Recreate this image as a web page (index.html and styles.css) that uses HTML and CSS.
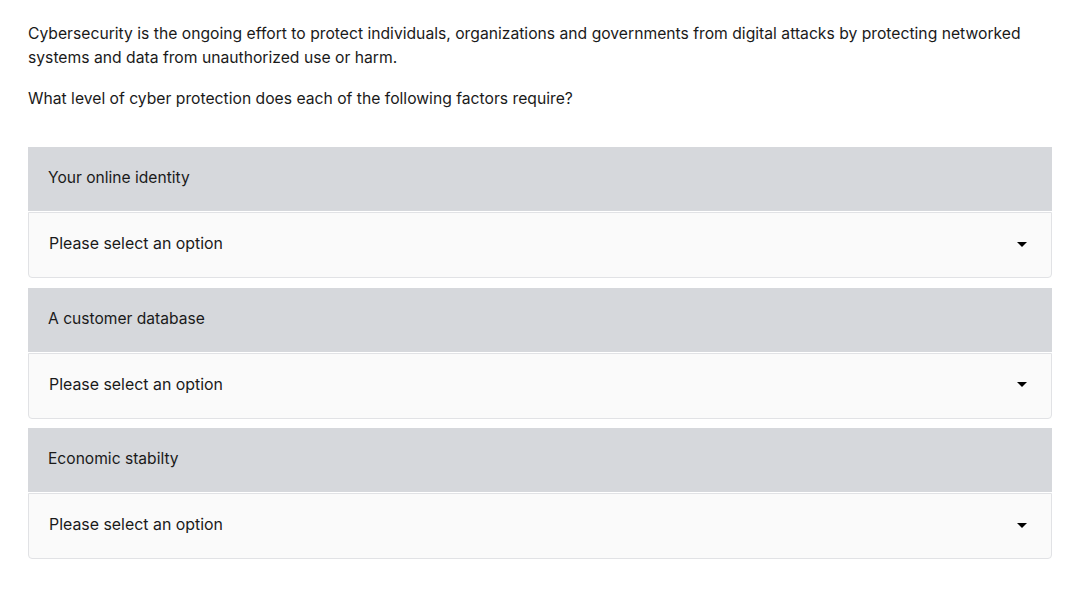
FILE: index.html
```html
<!DOCTYPE html>
<html lang="en">
<head>
<meta charset="utf-8">
<title>Cyber protection</title>
<link rel="stylesheet" href="styles.css">
</head>
<body>
<main class="page">
  <p class="intro">Cybersecurity is the ongoing effort to protect individuals, organizations and governments from digital attacks by protecting networked systems and data from unauthorized use or harm.</p>
  <p class="intro">What level of cyber protection does each of the following factors require?</p>
  <div class="questions">
    <div class="item">
      <div class="item-title">Your online identity</div>
      <div class="select">
        <span class="select-text">Please select an option</span>
        <span class="caret"></span>
      </div>
    </div>
    <div class="item">
      <div class="item-title">A customer database</div>
      <div class="select">
        <span class="select-text">Please select an option</span>
        <span class="caret"></span>
      </div>
    </div>
    <div class="item">
      <div class="item-title">Economic stabilty</div>
      <div class="select">
        <span class="select-text">Please select an option</span>
        <span class="caret"></span>
      </div>
    </div>
  </div>
</main>
</body>
</html>
```
FILE: styles.css
```css
* { box-sizing: border-box; }
body {
  margin: 0;
  background: #ffffff;
  font-family: Inter, "Noto Sans", sans-serif;
  color: #1a1a1a;
  font-size: 15.7px;
  line-height: 24px;
}
.page {
  padding: 22px 38px 0 28px;
}
.intro {
  margin: 0 0 17px 0;
}
.questions {
  margin-top: 36px;
  display: flex;
  flex-direction: column;
  gap: 9.5px;
}
.item {
  display: flex;
  flex-direction: column;
  gap: 1px;
}
.item-title {
  background: #d6d8dc;
  height: 64px;
  padding: 0 20px 2px 20px;
  display: flex;
  align-items: center;
  font-size: 15.6px;
}
.select {
  height: 66px;
  background: #fafafa;
  border: 1px solid #e1e2e5;
  border-radius: 0 0 4px 4px;
  display: flex;
  align-items: center;
  justify-content: space-between;
  padding: 0 24px 2px 20px;
  font-size: 15.9px;
}
.caret {
  width: 0;
  height: 0;
  border-left: 5px solid transparent;
  border-right: 5px solid transparent;
  border-top: 5px solid #000;
}
```
